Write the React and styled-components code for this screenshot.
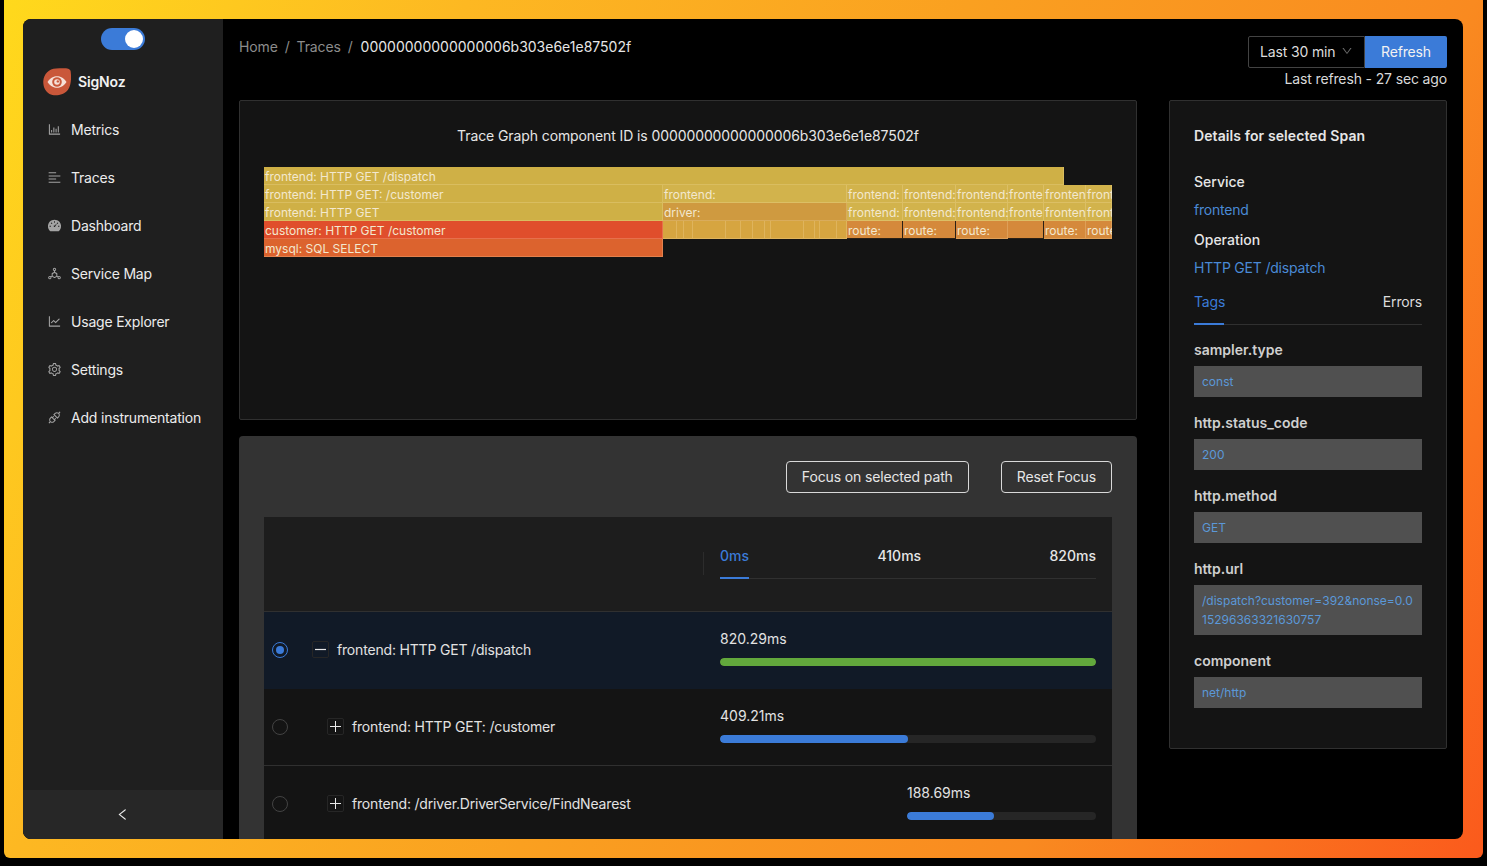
import React from 'react';
import styled, { createGlobalStyle } from 'styled-components';
import {
  AiOutlineBarChart, AiOutlineAlignLeft, AiFillDashboard, AiOutlineDeploymentUnit,
  AiOutlineLineChart, AiOutlineSetting, AiOutlineApi, AiOutlineDown, AiOutlineLeft,
} from 'react-icons/ai';

const BLUE = '#3b7bd8';
const LINK = '#4a8ad6';

const Global = createGlobalStyle`
  html, body { margin: 0; padding: 0; background: #000; height: 866px; overflow: hidden; }
  body { font-family: Inter, "Liberation Sans", sans-serif; font-size: 14px; color: #e6e6e6; letter-spacing: -0.14px; }
  * { box-sizing: border-box; }
`;

const Backdrop = styled.div`
  width: 1479px; height: 858px; margin-left: 4px; padding: 19px 20px 19px 19px;
  border-radius: 0 0 6px 6px;
  background: linear-gradient(118deg, #ffd91c 0%, #fdb822 24%, #faa020 50%, #f98a20 76%, #fb5a1c 100%);
`;
const Win = styled.div`
  display: flex; width: 1440px; height: 820px; border-radius: 8px; overflow: hidden; background: #000;
`;
const Sider = styled.aside`
  width: 200px; flex: none; display: flex; flex-direction: column; background: #1f1f1f;
`;
const ToggleRow = styled.div`display: flex; justify-content: center; padding-top: 9px;`;
const Toggle = styled.div`
  width: 44px; height: 22px; border-radius: 11px; background: ${BLUE};
  display: flex; justify-content: flex-end; align-items: center; padding: 2px;
`;
const Knob = styled.span`width: 18px; height: 18px; border-radius: 50%; background: #fff;`;
const Brand = styled.div`
  display: flex; align-items: center; gap: 7px; padding: 17px 0 0 20px; height: 46px;
`;
const BrandName = styled.span`font-weight: 600; font-size: 14px; color: #f2f2f2;`;
const Menu = styled.nav`display: flex; flex-direction: column; gap: 8px; padding-top: 13px; flex: 1;`;
const MenuItem = styled.div`
  height: 40px; display: flex; align-items: center; gap: 9px; padding-left: 24px;
  color: #ececec; font-size: 14px; letter-spacing: -0.2px;
  svg { color: #a3a3a3; font-size: 15px; flex: none; }
`;
const Collapse = styled.div`
  height: 49px; background: #272727; display: flex; align-items: center; justify-content: center;
  color: #e8e8e8; font-size: 15px; padding-right: 2px;
`;

const Main = styled.main`flex: 1; padding: 0 16px; overflow: hidden; min-width: 0;`;
const Top = styled.header`display: flex; justify-content: space-between; height: 81px;`;
const Crumbs = styled.div`display: flex; gap: 7px; padding-top: 19px; line-height: 18px; color: #8c8c8c;`;
const CrumbNow = styled.span`color: #e6e6e6; letter-spacing: 0; margin-left: 1px;`;
const TopRight = styled.div`display: flex; flex-direction: column; align-items: flex-end; padding-top: 17px;`;
const Controls = styled.div`display: flex; height: 32px;`;
const Select = styled.div`
  width: 117px; display: flex; align-items: center; justify-content: space-between;
  padding: 0 11px 2px; border: 1px solid #434343; border-radius: 2px 0 0 2px; color: #dcdcdc;
  svg { color: #6b6b6b; font-size: 12px; }
`;
const Refresh = styled.div`
  width: 82px; display: flex; align-items: center; justify-content: center; padding-bottom: 2px;
  background: ${BLUE}; color: #f2f2f2; border-radius: 0 2px 2px 0;
`;
const LastRefresh = styled.div`margin-top: 2px; line-height: 18px; color: #d9d9d9;`;

const Columns = styled.div`display: flex; gap: 32px; align-items: flex-start;`;
const Left = styled.div`width: 898px; flex: none; display: flex; flex-direction: column; gap: 16px;`;
const GraphCard = styled.section`
  height: 320px; background: #141414; border: 1px solid #303030; border-radius: 2px;
  padding: 25px 24px 0;
`;
const GraphTitle = styled.div`text-align: center; line-height: 20px; height: 41px; color: #e6e6e6; letter-spacing: -0.1px;`;
const Flame = styled.div`display: flex; flex-direction: column; width: 848px;`;
const FlameRow = styled.div`display: flex; height: 18px;`;
const Cell = styled.div`
  flex: none; overflow: hidden; white-space: nowrap; height: 18px; line-height: 20px;
  padding-left: 1px; font-size: 12px; color: #f3e8cf; letter-spacing: 0;
  background: ${p => p.$bg};
  box-shadow: inset -1px -1px 0 ${p => (p.$dark ? '#2a2016' : 'rgba(255,235,190,.22)')};
`;

const ListCard = styled.section`
  background: #333; border-radius: 4px 4px 0 0; padding: 25px 25px 0; height: 403px; overflow: hidden;
`;
const Actions = styled.div`display: flex; justify-content: flex-end; gap: 32px; margin-bottom: 24px;`;
const Btn = styled.div`
  height: 32px; padding: 0 15px 2px; display: flex; align-items: center; border: 1px solid #d9d9d9;
  border-radius: 4px; color: #e6e6e6; background: transparent;
`;
const Table = styled.div`background: #1d1d1d;`;
const Head = styled.div`
  height: 95px; display: flex; border-bottom: 1px solid #303030; padding-right: 16px;
`;
const HeadSpacer = styled.div`
  width: 440px; flex: none; position: relative; margin-top: 35px; height: 23px;
  border-right: 1px solid #2c2c2c;
`;
const Ticks = styled.div`
  margin-left: 16px; flex: 1; height: 62px; padding-top: 30px; position: relative;
  display: flex; justify-content: space-between; line-height: 18px; font-weight: 500; letter-spacing: 0;
  border-bottom: 1px solid #303030; color: #e6e6e6;
`;
const Tick = styled.span`color: ${p => (p.$on ? BLUE : 'inherit')};`;
const TickBar = styled.i`position: absolute; left: 0; bottom: -1px; width: 29px; height: 2px; background: ${BLUE};`;

const Row = styled.div`
  height: 77px; display: flex; align-items: center; padding-right: 16px;
  background: ${p => (p.$sel ? '#111a27' : '#141414')};
  border-bottom: 1px solid ${p => (p.$sel ? '#111a27' : p.$line ? '#303030' : '#141414')};
`;
const Radio = styled.span`
  width: 16px; height: 16px; border-radius: 50%; flex: none; margin-left: 8px;
  border: 1px solid ${p => (p.$on ? BLUE : '#434343')};
  display: flex; align-items: center; justify-content: center;
  &::after { content: ''; width: 8px; height: 8px; border-radius: 50%; background: ${p => (p.$on ? BLUE : 'transparent')}; }
`;
const NameCell = styled.div`
  width: 432px; flex: none; display: flex; align-items: center; gap: 8px; padding-bottom: 2px;
  padding-left: ${p => p.$indent}px; color: #e2e2e2; letter-spacing: -0.18px;
`;
const Expand = styled.span`
  width: 17px; height: 17px; flex: none; border: 1px solid #262626; border-radius: 2px;
  display: flex; align-items: center; justify-content: center;
`;
const Timing = styled.div`flex: 1; display: flex; flex-direction: column; gap: 9px; padding-bottom: 5px;`;
const Dur = styled.div`line-height: 20px; color: #e2e2e2; letter-spacing: 0; padding-left: ${p => p.$offset}px;`;
const Track = styled.div`height: 8px; margin-left: ${p => p.$offset}px; border-radius: 4px; background: #262626; overflow: hidden;`;
const Fill = styled.div`height: 8px; border-radius: 4px; background: ${p => p.$color};`;

const Details = styled.aside`
  width: 278px; flex: none; height: 649px; background: #141414; border: 1px solid #303030;
  border-radius: 2px; padding: 25px 24px 0;
`;
const DetailsTitle = styled.div`font-weight: 600; line-height: 20px; margin-bottom: 26px; color: #e6e6e6; letter-spacing: 0.1px;`;
const FieldLabel = styled.div`font-weight: 500; line-height: 20px; color: #e6e6e6; margin-bottom: 8px; letter-spacing: 0;`;
const FieldValue = styled.div`color: ${LINK}; line-height: 20px; margin-bottom: 10px; letter-spacing: -0.2px;`;
const Tabs = styled.div`
  display: flex; justify-content: space-between; position: relative; margin-top: 14px; height: 33px;
  line-height: 20px; border-bottom: 1px solid #303030;
`;
const Tab = styled.span`color: ${p => (p.$on ? BLUE : '#dcdcdc')};`;
const TabBar = styled.i`position: absolute; left: 0; bottom: -1px; width: 30px; height: 2px; background: ${BLUE};`;
const Tags = styled.div`display: flex; flex-direction: column; padding-top: 15px;`;
const TagLabel = styled.div`font-weight: 600; line-height: 20px; color: #cfcfcf; margin-bottom: 6.4px; letter-spacing: 0;`;
const TagValue = styled.div`
  background: #505050; color: #5b98d8; font-size: 12px; line-height: 19px; padding: 6px 8px;
  word-break: break-all; margin-bottom: 15.6px; letter-spacing: 0;
`;

const Logo = () => (
  <svg width="28" height="28" viewBox="0 0 28 28">
    <path d="M13 .5C20 .2 27 -.5 27.6 3 28.4 8 28.6 17 24.8 22 21 27 12 28.8 6.5 26 1.5 23 0 17.5.3 13 .7 6 6 .8 13 .5Z" fill="#c9573a" />
    <path d="M4.5 14C7.5 9.6 10.6 8.2 14 8.2S20.500 9.6 23.500 14C20.500 18.400 17.400 19.800 14 19.800S7.500 18.400 4.500 14Z" fill="#f6e0d8" />
    <circle cx="14" cy="14" r="4.800" fill="#c9573a" />
    <circle cx="14" cy="14" r="2.800" fill="#f6e0d8" />
    <circle cx="14.800" cy="13.400" r="1.200" fill="#c9573a" />
  </svg>
);

const Plus = () => (
  <svg width="11" height="11" viewBox="0 0 11 11"><path d="M0 5.500h11M5.500 0v11" stroke="#e8e8e8" strokeWidth="1" /></svg>
);
const Minus = () => (
  <svg width="11" height="11" viewBox="0 0 11 11"><path d="M0 5.500h11" stroke="#e8e8e8" strokeWidth="1.200" /></svg>
);

const menu = [
  [AiOutlineBarChart, 'Metrics'], [AiOutlineAlignLeft, 'Traces'], [AiFillDashboard, 'Dashboard'],
  [AiOutlineDeploymentUnit, 'Service Map'], [AiOutlineLineChart, 'Usage Explorer'],
  [AiOutlineSetting, 'Settings'], [AiOutlineApi, 'Add instrumentation'],
];

const Y = '#cfb046', Y2 = '#d2b34c', O = '#cf9a40', R = '#e04e2c', M = '#dc632e', RT = '#d5893b', G = '#d6a540';
const tails = [56, 53, 52, 36, 42, 26];
const tailLabels = [['frontend:', 'route:'], ['frontend:', 'route:'], ['frontend:', 'route:'], ['fronte', ''], ['frontend', 'route:'], ['frontend', 'route:']];
const darkEnds = [true, true, false, true, false, false];
const subWidths = [14, 7, 9, 33, 15, 12, 12, 6, 33, 11, 5, 17, 10];

const Span = ({ c, w, dark, children }) => <Cell $bg={c} $dark={dark} style={{ width: w }}>{children}</Cell>;

const rows = [
  { sel: true, indent: 24, name: 'frontend: HTTP GET /dispatch', dur: '820.29ms', offset: 0, fill: '100%', color: '#62a83c', icon: <Minus /> },
  { indent: 39, line: true, name: 'frontend: HTTP GET: /customer', dur: '409.21ms', offset: 0, fill: '50%', color: BLUE, icon: <Plus /> },
  { indent: 39, name: 'frontend: /driver.DriverService/FindNearest', dur: '188.69ms', offset: 187, fill: '46%', color: BLUE, icon: <Plus /> },
];

const tags = [
  ['sampler.type', 'const'], ['http.status_code', '200'], ['http.method', 'GET'],
  ['http.url', '/dispatch?customer=392&nonse=0.015296363321630757'], ['component', 'net/http'],
];

export default function App() {
  return (
    <>
      <Global />
      <Backdrop>
        <Win>
          <Sider>
            <ToggleRow><Toggle><Knob /></Toggle></ToggleRow>
            <Brand><Logo /><BrandName>SigNoz</BrandName></Brand>
            <Menu>
              {menu.map(([I, t]) => <MenuItem key={t}><I />{t}</MenuItem>)}
            </Menu>
            <Collapse><AiOutlineLeft /></Collapse>
          </Sider>
          <Main>
            <Top>
              <Crumbs>
                <span>Home</span><span>/</span><span>Traces</span><span>/</span>
                <CrumbNow>00000000000000006b303e6e1e87502f</CrumbNow>
              </Crumbs>
              <TopRight>
                <Controls>
                  <Select>Last 30 min <AiOutlineDown /></Select>
                  <Refresh>Refresh</Refresh>
                </Controls>
                <LastRefresh>Last refresh - 27 sec ago</LastRefresh>
              </TopRight>
            </Top>
            <Columns>
              <Left>
                <GraphCard>
                  <GraphTitle>Trace Graph component ID is 00000000000000006b303e6e1e87502f</GraphTitle>
                  <Flame>
                    <FlameRow><Span c={Y} w={800}>frontend: HTTP GET /dispatch</Span></FlameRow>
                    <FlameRow>
                      <Span c={Y} w={399}>frontend: HTTP GET: /customer</Span>
                      <Span c={Y2} w={184}>frontend:</Span>
                      {tails.map((w, i) => <Span key={i} c={Y2} w={w}>{tailLabels[i][0]}</Span>)}
                    </FlameRow>
                    <FlameRow>
                      <Span c={Y} w={399}>frontend: HTTP GET</Span>
                      <Span c={O} w={184}>driver:</Span>
                      {tails.map((w, i) => <Span key={i} c={Y2} w={w}>{tailLabels[i][0]}</Span>)}
                    </FlameRow>
                    <FlameRow>
                      <Span c={R} w={399}>customer: HTTP GET /customer</Span>
                      {subWidths.map((w, i) => <Span key={i} c={G} w={w} />)}
                      {tails.map((w, i) => <Span key={i} c={RT} w={w} dark={darkEnds[i]}>{tailLabels[i][1]}</Span>)}
                    </FlameRow>
                    <FlameRow><Span c={M} w={399}>mysql: SQL SELECT</Span></FlameRow>
                  </Flame>
                </GraphCard>
                <ListCard>
                  <Actions>
                    <Btn>Focus on selected path</Btn>
                    <Btn>Reset Focus</Btn>
                  </Actions>
                  <Table>
                    <Head>
                      <HeadSpacer />
                      <Ticks>
                        <Tick $on>0ms</Tick><Tick>410ms</Tick><Tick>820ms</Tick>
                        <TickBar />
                      </Ticks>
                    </Head>
                    {rows.map(r => (
                      <Row key={r.name} $sel={r.sel} $line={r.line}>
                        <Radio $on={r.sel} />
                        <NameCell $indent={r.indent}>
                          <Expand>{r.icon}</Expand>
                          {r.name}
                        </NameCell>
                        <Timing>
                          <Dur $offset={r.offset}>{r.dur}</Dur>
                          <Track $offset={r.offset}><Fill $color={r.color} style={{ width: r.fill }} /></Track>
                        </Timing>
                      </Row>
                    ))}
                  </Table>
                </ListCard>
              </Left>
              <Details>
                <DetailsTitle>Details for selected Span</DetailsTitle>
                <FieldLabel>Service</FieldLabel>
                <FieldValue>frontend</FieldValue>
                <FieldLabel>Operation</FieldLabel>
                <FieldValue>HTTP GET /dispatch</FieldValue>
                <Tabs>
                  <Tab $on>Tags</Tab><Tab>Errors</Tab>
                  <TabBar />
                </Tabs>
                <Tags>
                  {tags.map(([k, v]) => (
                    <div key={k}>
                      <TagLabel>{k}</TagLabel>
                      <TagValue>{v}</TagValue>
                    </div>
                  ))}
                </Tags>
              </Details>
            </Columns>
          </Main>
        </Win>
      </Backdrop>
    </>
  );
}
